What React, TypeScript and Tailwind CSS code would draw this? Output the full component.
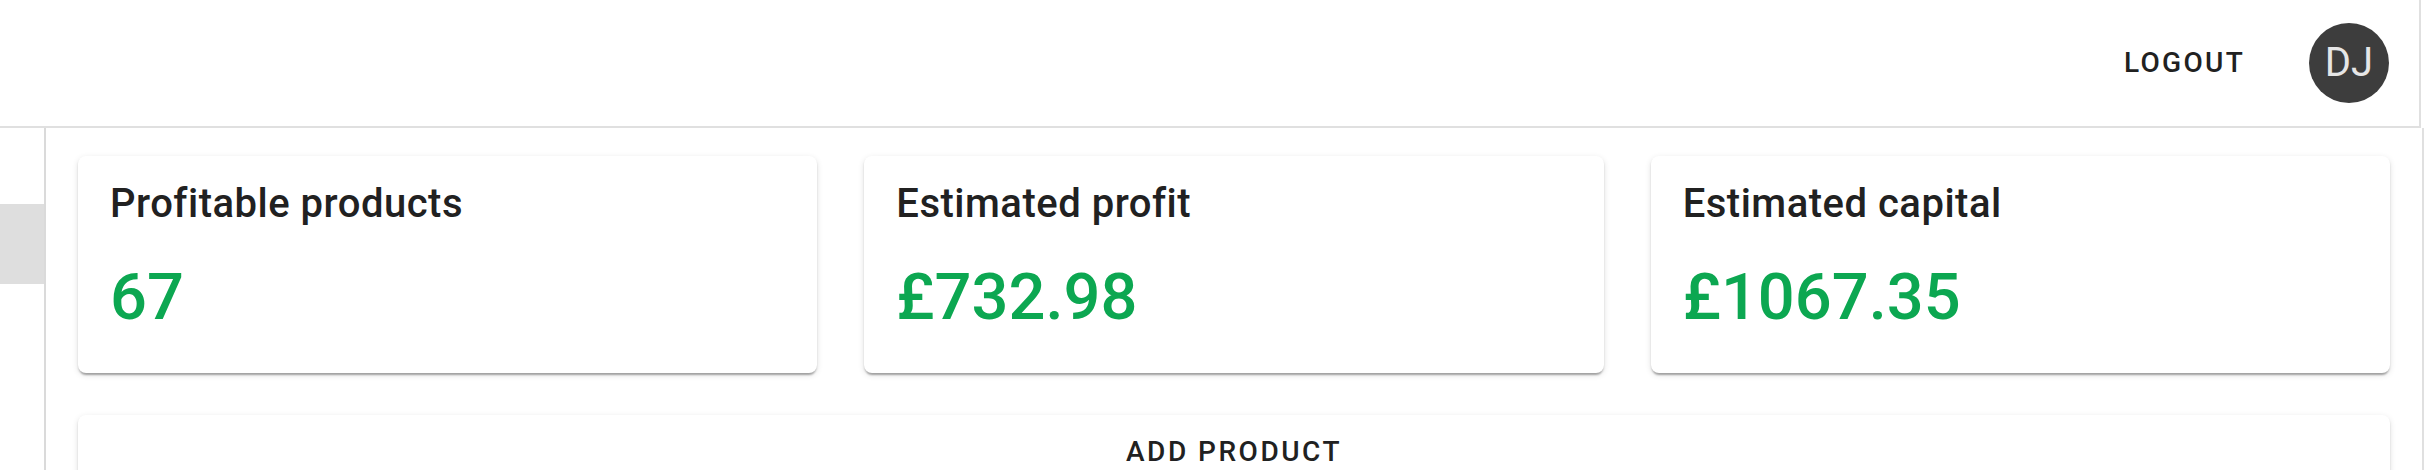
import React from 'react';

const stats = [
  { label: 'Profitable products', value: '67' },
  { label: 'Estimated profit', value: '£732.98' },
  { label: 'Estimated capital', value: '£1067.35' },
];

const cardShadow =
  'shadow-[0_4px_2px_-2px_rgba(0,0,0,0.2),0_2px_2px_0_rgba(0,0,0,0.14),0_2px_6px_0_rgba(0,0,0,0.12)]';

function StatCard({ label, value }: { label: string; value: string }) {
  return (
    <div className={`h-[217px] rounded-[8px] bg-white px-[32px] pt-[24px] ${cardShadow}`}>
      <h6 className="text-[40px] font-medium leading-[48px] tracking-[0.5px] text-[#212121]">{label}</h6>
      <div className="mt-[27px] text-[65px] font-medium leading-[84px] text-[#0ca751]">{value}</div>
    </div>
  );
}

export default function App() {
  return (
    <div className="h-[470px] w-[2424px] overflow-hidden bg-white font-['Roboto',sans-serif]">
      {/* top bar */}
      <header className="flex h-[128px] w-[2421px] items-center justify-end border-b-2 border-r-2 border-[#e0e0e0] bg-white pr-[30px]">
        <button className="mr-[48px] px-[16px] py-[12px] text-[28px] font-medium uppercase leading-[40px] tracking-[2.3px] text-[#212121]">
          Logout
        </button>
        <div className="flex h-[80px] w-[80px] items-center justify-center rounded-full bg-[#3d3d3d] text-[40px] leading-none text-[#e6e6e6]">
          DJ
        </div>
      </header>

      <div className="flex h-[342px] w-[2424px] border-r-2 border-[#e0e0e0]">
        {/* collapsed sidebar */}
        <aside className="w-[46px] shrink-0 border-r-2 border-[#dadada] pt-[76px]">
          <div className="h-[80px] bg-[#dedede]" />
        </aside>

        <main className="flex-1 px-[32px] pt-[28px]">
          <div className="grid grid-cols-3 gap-x-[47px]">
            {stats.map((s) => (
              <StatCard key={s.label} label={s.label} value={s.value} />
            ))}
          </div>
          <div className={`mt-[42px] h-[120px] rounded-[8px] bg-white pt-[13px] text-center ${cardShadow}`}>
            <span className="text-[28px] font-medium uppercase leading-[48px] tracking-[2.5px] text-[#212121]">
              Add product
            </span>
          </div>
        </main>
      </div>
    </div>
  );
}
